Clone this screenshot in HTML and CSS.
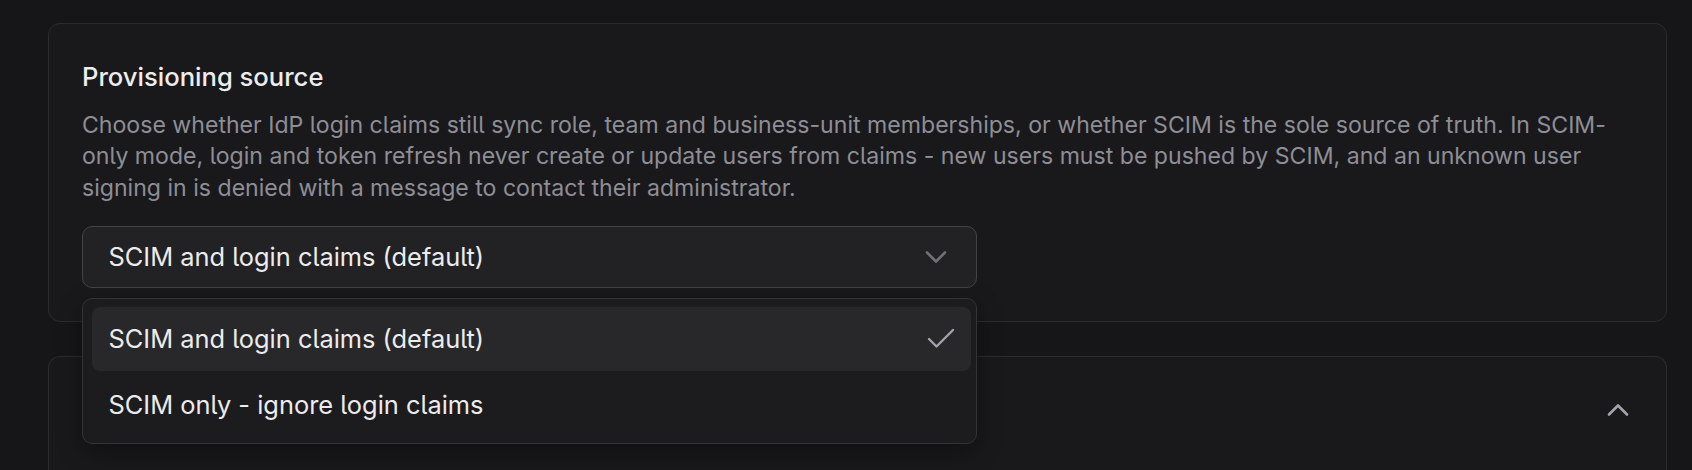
FILE: index.html
```html
<!DOCTYPE html>
<html lang="en">
<head>
<meta charset="utf-8">
<title>Provisioning source</title>
<link rel="stylesheet" href="styles.css">
</head>
<body>
<main class="page">
  <section class="card">
    <h2 class="card-title">Provisioning source</h2>
    <p class="card-desc">Choose whether IdP login claims still sync role, team and business-unit memberships, or whether SCIM is the sole source of truth. In SCIM-only mode, login and token refresh never create or update users from claims - new users must be pushed by SCIM, and an unknown user signing in is denied with a message to contact their administrator.</p>
    <div class="select-wrap">
      <button class="select" type="button">
        <span class="select-value">SCIM and login claims (default)</span>
        <svg class="icon icon-muted" viewBox="0 0 24 24" fill="none" stroke="currentColor" stroke-width="1.75" stroke-linecap="round" stroke-linejoin="round"><path d="m6 9 6 6 6-6"/></svg>
      </button>
      <ul class="menu">
        <li class="menu-item is-selected">
          <span>SCIM and login claims (default)</span>
          <svg class="icon" viewBox="0 0 24 24" fill="none" stroke="currentColor" stroke-width="1.6" stroke-linecap="round" stroke-linejoin="round"><path d="M20 6 9 17l-5-5"/></svg>
        </li>
        <li class="menu-item">
          <span>SCIM only - ignore login claims</span>
        </li>
      </ul>
    </div>
  </section>
  <section class="card card-collapsed">
    <div class="card-head">
      <span class="card-head-title"></span>
      <svg class="icon icon-toggle" viewBox="0 0 24 24" fill="none" stroke="currentColor" stroke-width="1.75" stroke-linecap="round" stroke-linejoin="round"><path d="m18 15-6-6-6 6"/></svg>
    </div>
  </section>
</main>
</body>
</html>
```
FILE: styles.css
```css
* { box-sizing: border-box; }
html, body { margin: 0; padding: 0; }
body {
  background: #161618;
  font-family: Inter, "Noto Sans", sans-serif;
  font-feature-settings: "cv05" 1;
  color: #ececee;
  height: 470px;
  overflow: hidden;
}
.page {
  padding: 23px 25px 0 48px;
  display: flex;
  flex-direction: column;
  gap: 34px;
}
.card {
  background: #19191b;
  border: 1px solid #2c2c30;
  border-radius: 12px;
  padding: 36px 33px 33px 33px;
}
.card-title {
  margin: 0;
  font-size: 25.6px;
  line-height: 34px;
  font-weight: 500;
  color: #ededef;
}
.card-desc {
  margin: 15.5px 0 0;
  font-size: 23.1px;
  line-height: 31.5px;
  color: #8e8e97;
  font-weight: 400;
}
.select-wrap {
  position: relative;
  width: 895px;
  margin-top: 21.5px;
}
.select {
  width: 100%;
  height: 62px;
  display: flex;
  align-items: center;
  justify-content: space-between;
  padding: 0 22px 0 25.5px;
  background: #222225;
  border: 1.5px solid #434347;
  border-radius: 10px;
  color: #ececee;
  font: inherit;
  font-size: 25.4px;
  text-align: left;
}
.icon {
  width: 36px;
  height: 36px;
  flex: none;
}
.icon-muted { color: #6f6f76; }
.menu {
  position: absolute;
  left: 0;
  top: 72px;
  width: 100%;
  margin: 0;
  list-style: none;
  padding: 8.5px 5px 7px 9px;
  background: #1c1c1f;
  border: 1.5px solid #333337;
  border-radius: 10px;
  display: flex;
  flex-direction: column;
  gap: 2px;
  box-shadow: 0 8px 24px rgba(0, 0, 0, 0.35);
  z-index: 2;
}
.menu-item {
  height: 63.5px;
  display: flex;
  align-items: center;
  justify-content: space-between;
  padding: 0 12px 0 16.5px;
  border-radius: 8px;
  font-size: 25.4px;
  color: #ececee;
}
.menu-item.is-selected {
  background: #28282b;
}
.menu-item .icon { color: #a3a3ab; }
.card-collapsed {
  padding-top: 34px;
  padding-bottom: 0;
  border-bottom: 0;
  border-bottom-left-radius: 0;
  border-bottom-right-radius: 0;
  height: 114px;
}
.card-head {
  height: 38px;
  display: flex;
  align-items: center;
  justify-content: space-between;
  margin-right: -3px;
}
.icon-toggle { color: #a3a3ab; }
```
